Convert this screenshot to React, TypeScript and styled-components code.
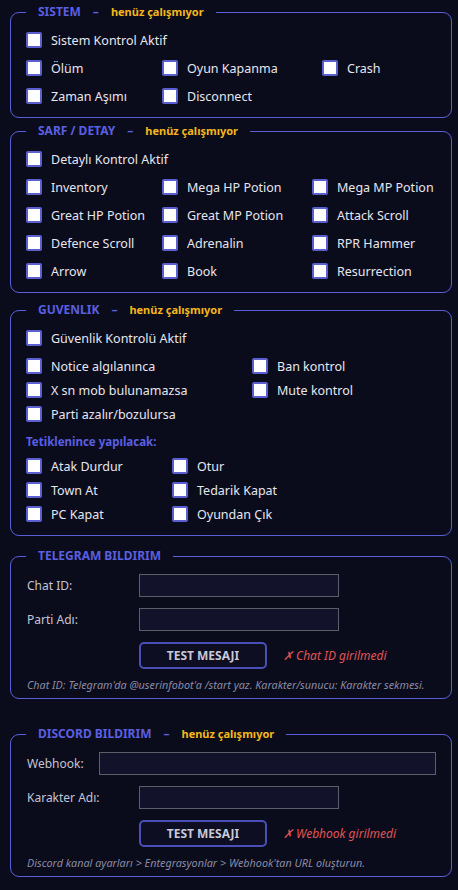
import React from "react";
import styled, { createGlobalStyle } from "styled-components";

const Global = createGlobalStyle`
  html, body { margin: 0; padding: 0; background: #0b0c1b; }
  body { font-family: "Noto Sans", "Open Sans", sans-serif; color: #e4e4ee; }
  * { box-sizing: border-box; }
`;

const Page = styled.div`
  width: 458px;
  padding: 4px 6px 20px 10px;
  display: flex;
  flex-direction: column;
`;

const Section = styled.fieldset<{ $mt?: number; $form?: boolean }>`
  margin: ${(p) => p.$mt ?? 0}px 0 0 0;
  padding: ${(p) => (p.$form ? "10px 15px 6px 15px" : "12px 15px 13px 15px")};
  border: 1px solid #5a5fd8;
  border-radius: 9px;
  min-inline-size: 0;
  display: flex;
  flex-direction: column;
`;

const Legend = styled.legend`
  padding: 0 12px;
  font-size: 12px;
  line-height: 16px;
  font-weight: 700;
  color: #5a5fe0;
  display: flex;
  align-items: center;
`;

const Dash = styled.span`
  margin: 0 12px;
  font-weight: 700;
`;

const Status = styled.span`
  color: #f4b71c;
  font-size: 11px;
  font-weight: 700;
`;

const Stack = styled.div<{ $gap: number }>`
  display: flex;
  flex-direction: column;
  gap: ${(p) => p.$gap}px;
`;

const Grid = styled.div<{ $cols: string; $gap: number }>`
  display: grid;
  grid-template-columns: ${(p) => p.$cols};
  row-gap: ${(p) => p.$gap}px;
`;

const Item = styled.label`
  display: flex;
  align-items: center;
  gap: 9px;
  height: 16px;
  font-size: 12.5px;
  color: #e6e6ef;
  white-space: nowrap;
`;

const Box = styled.input.attrs({ type: "checkbox" })`
  appearance: none;
  margin: 0;
  width: 16px;
  height: 16px;
  flex: 0 0 16px;
  background: #ffffff;
  border: 2px solid #5b5fcf;
  border-radius: 2px;
`;

const SubHead = styled.div`
  font-size: 11.5px;
  font-weight: 700;
  color: #5a5fe0;
  line-height: 16px;
`;

const FormRow = styled.div`
  display: flex;
  align-items: center;
  height: 23px;
`;

const FieldLabel = styled.span<{ $w: number }>`
  width: ${(p) => p.$w}px;
  flex: 0 0 ${(p) => p.$w}px;
  padding-left: 1px;
  font-size: 12px;
  color: #c4c4d4;
`;

const TextInput = styled.input<{ $w: number }>`
  width: ${(p) => p.$w}px;
  height: 23px;
  background: #12132b;
  border: 1px solid #5e5e68;
  color: #e4e4ee;
  padding: 0 4px;
  outline: none;
`;

const ButtonRow = styled.div`
  display: flex;
  align-items: center;
  gap: 16px;
  padding-left: 113px;
`;

const TestButton = styled.button`
  width: 128px;
  height: 27px;
  background: #0d0e21;
  border: 2px solid #4a4fb8;
  border-radius: 5px;
  color: #c8c8d8;
  font-family: "Noto Sans", "Open Sans", sans-serif;
  font-size: 12px;
  font-weight: 700;
  padding: 0;
`;

const ErrorText = styled.span`
  color: #e05555;
  font-style: italic;
  font-size: 12px;
`;

const Hint = styled.div`
  margin-top: -2px;
  padding-left: 1px;
  color: #8a8aa4;
  font-style: italic;
  font-size: 10.8px;
  line-height: 14px;
  white-space: nowrap;
`;

const Check = ({ label }: { label: string }) => (
  <Item>
    <Box />
    <span>{label}</span>
  </Item>
);

const NOT_YET = "henüz çalışmıyor";

export default function App() {
  return (
    <>
      <Global />
      <Page>
        <Section>
          <Legend>
            SISTEM<Dash>–</Dash>
            <Status>{NOT_YET}</Status>
          </Legend>
          <Stack $gap={12}>
            <Check label="Sistem Kontrol Aktif" />
            <Grid $cols="136px 160px 1fr" $gap={12}>
              <Check label="Ölüm" />
              <Check label="Oyun Kapanma" />
              <Check label="Crash" />
              <Check label="Zaman Aşımı" />
              <Check label="Disconnect" />
            </Grid>
          </Stack>
        </Section>

        <Section $mt={5}>
          <Legend>
            SARF / DETAY<Dash>–</Dash>
            <Status>{NOT_YET}</Status>
          </Legend>
          <Stack $gap={12}>
            <Check label="Detaylı Kontrol Aktif" />
            <Grid $cols="136px 150px 1fr" $gap={12}>
              <Check label="Inventory" />
              <Check label="Mega HP Potion" />
              <Check label="Mega MP Potion" />
              <Check label="Great HP Potion" />
              <Check label="Great MP Potion" />
              <Check label="Attack Scroll" />
              <Check label="Defence Scroll" />
              <Check label="Adrenalin" />
              <Check label="RPR Hammer" />
              <Check label="Arrow" />
              <Check label="Book" />
              <Check label="Resurrection" />
            </Grid>
          </Stack>
        </Section>

        <Section $mt={9}>
          <Legend>
            GUVENLIK<Dash>–</Dash>
            <Status>{NOT_YET}</Status>
          </Legend>
          <Stack $gap={12}>
            <Check label="Güvenlik Kontrolü Aktif" />
            <Grid $cols="226px 1fr" $gap={8}>
              <Check label="Notice algılanınca" />
              <Check label="Ban kontrol" />
              <Check label="X sn mob bulunamazsa" />
              <Check label="Mute kontrol" />
              <Check label="Parti azalır/bozulursa" />
            </Grid>
            <Stack $gap={8}>
              <SubHead>Tetiklenince yapılacak:</SubHead>
              <Grid $cols="146px 1fr" $gap={8}>
                <Check label="Atak Durdur" />
                <Check label="Otur" />
                <Check label="Town At" />
                <Check label="Tedarik Kapat" />
                <Check label=" PC Kapat" />
                <Check label="Oyundan Çık" />
              </Grid>
            </Stack>
          </Stack>
        </Section>

        <Section $mt={12} $form>
          <Legend>TELEGRAM BILDIRIM</Legend>
          <Stack $gap={11}>
            <FormRow>
              <FieldLabel $w={113}>Chat ID:</FieldLabel>
              <TextInput $w={200} />
            </FormRow>
            <FormRow>
              <FieldLabel $w={113}>Parti Adı:</FieldLabel>
              <TextInput $w={200} />
            </FormRow>
            <ButtonRow>
              <TestButton>TEST MESAJI</TestButton>
              <ErrorText>✗ Chat ID girilmedi</ErrorText>
            </ButtonRow>
            <Hint>
              Chat ID: Telegram'da @userinfobot'a /start yaz. Karakter/sunucu: Karakter sekmesi.
            </Hint>
          </Stack>
        </Section>

        <Section $mt={27} $form>
          <Legend>
            DISCORD BILDIRIM<Dash>–</Dash>
            <Status>{NOT_YET}</Status>
          </Legend>
          <Stack $gap={11}>
            <FormRow>
              <FieldLabel $w={73}>Webhook:</FieldLabel>
              <TextInput $w={340} />
            </FormRow>
            <FormRow>
              <FieldLabel $w={113}>Karakter Adı:</FieldLabel>
              <TextInput $w={200} />
            </FormRow>
            <ButtonRow>
              <TestButton>TEST MESAJI</TestButton>
              <ErrorText>✗ Webhook girilmedi</ErrorText>
            </ButtonRow>
            <Hint>Discord kanal ayarları &gt; Entegrasyonlar &gt; Webhook'tan URL oluşturun.</Hint>
          </Stack>
        </Section>
      </Page>
    </>
  );
}
